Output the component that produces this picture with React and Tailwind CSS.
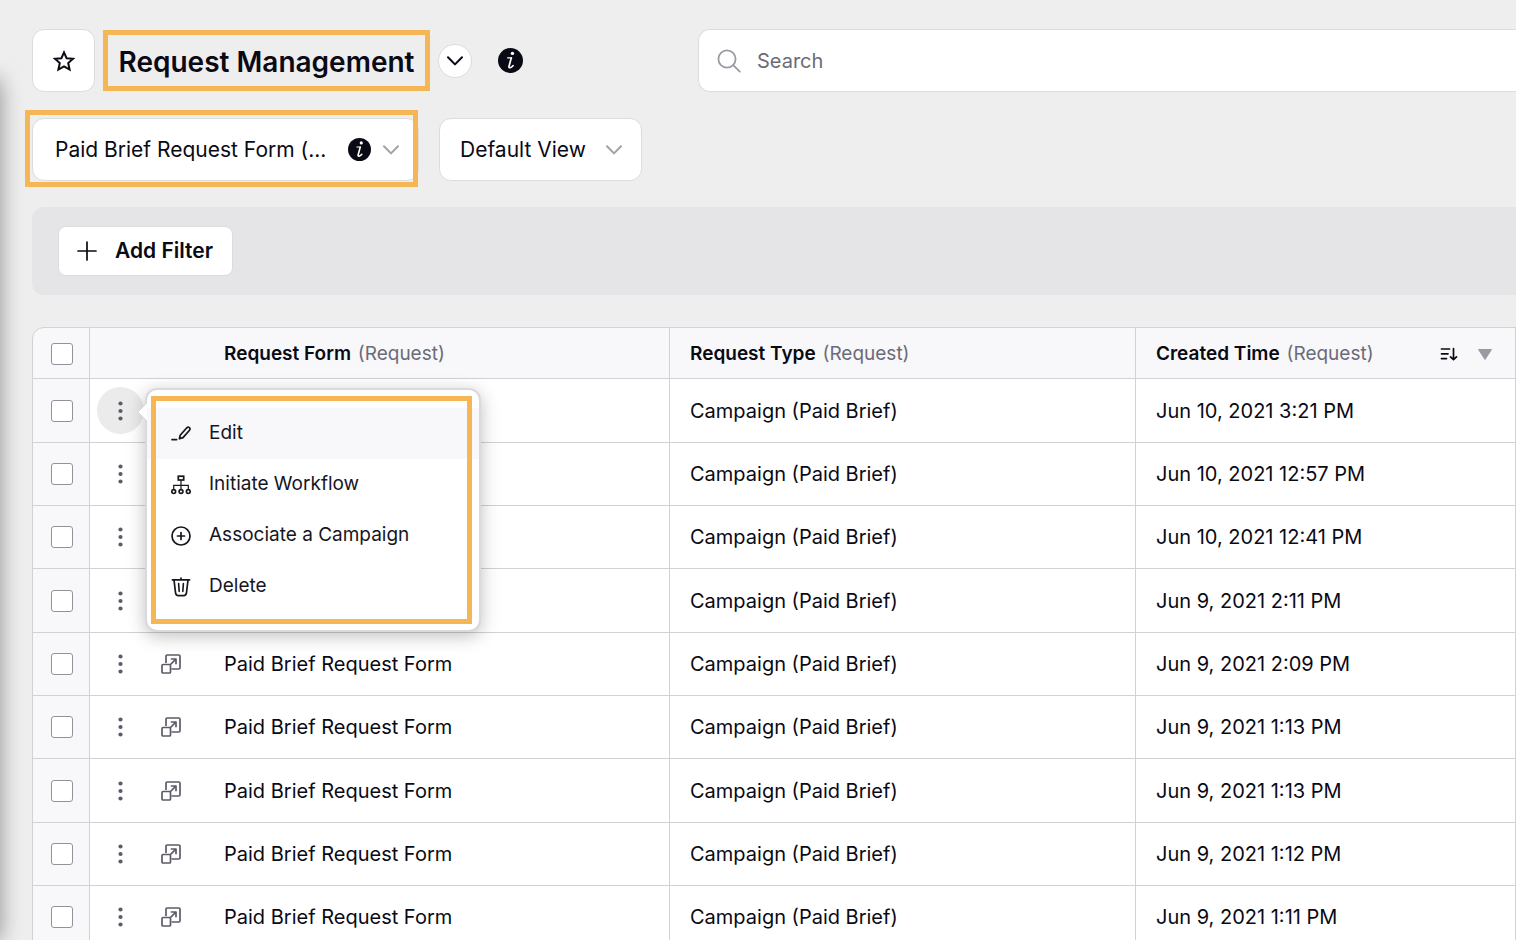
import { useState } from "react";

const rows = [
  { id: 1, form: "", created: "Jun 10, 2021 3:21 PM" },
  { id: 2, form: "", created: "Jun 10, 2021 12:57 PM" },
  { id: 3, form: "", created: "Jun 10, 2021 12:41 PM" },
  { id: 4, form: "", created: "Jun 9, 2021 2:11 PM" },
  { id: 5, form: "Paid Brief Request Form", created: "Jun 9, 2021 2:09 PM" },
  { id: 6, form: "Paid Brief Request Form", created: "Jun 9, 2021 1:13 PM" },
  { id: 7, form: "Paid Brief Request Form", created: "Jun 9, 2021 1:13 PM" },
  { id: 8, form: "Paid Brief Request Form", created: "Jun 9, 2021 1:12 PM" },
  { id: 9, form: "Paid Brief Request Form", created: "Jun 9, 2021 1:11 PM" },
];

const Chevron = ({ className }) => (
  <svg viewBox="0 0 16 10" fill="none" stroke="currentColor" strokeWidth="2" strokeLinecap="round" strokeLinejoin="round" className={className}>
    <path d="M1 1.2 8 8.4 15 1.2" />
  </svg>
);

const InfoIcon = ({ className }) => (
  <svg viewBox="0 0 26 26" className={className}>
    <circle cx="13" cy="13" r="13" fill="#0a0a14" />
    <circle cx="15" cy="5.6" r="1.8" fill="#fff" />
    <path d="M10 10.200H14.200" fill="none" stroke="#fff" strokeWidth="1.3" strokeLinecap="round" />
    <path d="M13.800 10.400 11.400 19.200C11 21.200 13.400 21 15.600 18.400" fill="none" stroke="#fff" strokeWidth="1.8" strokeLinecap="round" strokeLinejoin="round" />
  </svg>
);

const StarIcon = () => (
  <svg viewBox="0 0 24 24" fill="none" stroke="#0a0a14" strokeWidth="2" strokeLinejoin="miter" className="w-6 h-6">
    <path d="M12 3.4 14.6 9.2 21 9.8 16.2 14 17.6 20.6 12 17.3 6.4 20.6 7.8 14 3 9.8 9.4 9.2Z" />
  </svg>
);

const OpenIcon = () => (
  <svg viewBox="0 0 20 20" fill="none" stroke="#5c5c69" strokeWidth="1.7" strokeLinejoin="round" className="w-5 h-5">
    <path d="M5 9V2.2Q5 1 6.200 1H17.800Q19 1 19 2.200V13.800Q19 15 17.800 15H10.500" />
    <rect x="1" y="10.500" width="8.500" height="8.500" rx="1" />
    <path d="M9 11 14.800 5.200M9.800 5H15V10.200" />
  </svg>
);

const EditIcon = () => (
  <svg viewBox="0 0 20 20" fill="none" stroke="#16161f" strokeWidth="1.7" strokeLinecap="round" strokeLinejoin="round" className="w-5 h-5">
    <path d="M1 15.600H5.600" />
    <path d="M8.400 14.800 9.200 11.200 15.800 3.800C17.400 2.200 20 4.400 18.500 6.200L12 13.600Z" />
  </svg>
);

const WorkflowIcon = () => (
  <svg viewBox="0 0 20 20" fill="none" stroke="#16161f" strokeWidth="1.7" className="w-5 h-5">
    <rect x="7.300" y="1.200" width="5.400" height="3.800" />
    <path d="M10 5V14.500M2.700 14.500V10.300H17.300V14.500" strokeWidth="1.200" />
    <circle cx="2.700" cy="16.600" r="1.900" fill="#fff" />
    <circle cx="10" cy="16.600" r="1.900" fill="#fff" />
    <circle cx="17.300" cy="16.600" r="1.900" fill="#fff" />
  </svg>
);

const AssociateIcon = () => (
  <svg viewBox="0 0 20 20" fill="none" stroke="#16161f" strokeWidth="1.7" strokeLinecap="round" className="w-5 h-5">
    <circle cx="10" cy="10" r="9" />
    <path d="M10 6.500V13.500M6.500 10H13.500" />
  </svg>
);

const DeleteIcon = () => (
  <svg viewBox="0 0 20 20" fill="none" stroke="#16161f" strokeWidth="1.7" strokeLinecap="round" strokeLinejoin="round" className="w-5 h-5">
    <path d="M1.400 2.800H18.600M10 1V2.600" />
    <path d="M3 3 4.500 15.600Q4.900 18.600 7.400 18.600H12.600Q15.100 18.600 15.500 15.600L17 3" />
    <path d="M7.600 6.600 8.200 14.400M12.400 6.600 11.800 14.400" strokeWidth="1.600" />
  </svg>
);

const menuItems = [
  { label: "Edit", icon: EditIcon },
  { label: "Initiate Workflow", icon: WorkflowIcon },
  { label: "Associate a Campaign", icon: AssociateIcon },
  { label: "Delete", icon: DeleteIcon },
];

const ActionMenu = () => (
  <div className="absolute left-[55px] top-[9px] z-20 w-[336px] rounded-xl border-2 border-[#d9d9de] bg-white py-[18px] shadow-[0_4px_18px_rgba(0,0,0,0.25)]">
    <svg viewBox="0 0 10 18" className="absolute -left-[10px] top-[13px] w-[10px] h-[18px]">
      <path d="M10 0 1 9 10 18" fill="#fff" stroke="#d9d9de" strokeWidth="1" />
    </svg>
    {menuItems.map(({ label, icon: Icon }) => (
      <button
        key={label}
        type="button"
        className="flex h-[51px] w-full items-center gap-[18px] pl-6 text-left text-[19px] text-[#16161f] first-of-type:bg-[#f8f8fa]"
      >
        <Icon />
        {label}
      </button>
    ))}
    <div className="pointer-events-none absolute top-1.5 bottom-1.5 left-1 right-[7px] border-5 border-[#f5b755]" />
  </div>
);

const Checkbox = ({ label, checked, onChange }) => (
  <input
    type="checkbox"
    aria-label={label}
    checked={checked}
    onChange={onChange}
    className="block mx-auto w-[22px] h-[22px] appearance-none rounded-[3px] border border-[#92929c] bg-white checked:bg-[#5c5c69]"
  />
);

const App = () => {
  const [selected, setSelected] = useState([]);
  const [openRow, setOpenRow] = useState(1);
  const [search, setSearch] = useState("");

  const toggleRow = (id) => {
    setSelected((prev) =>
      prev.includes(id) ? prev.filter((item) => item !== id) : [...prev, id]
    );
  };

  const toggleAll = () => {
    setSelected(selected.length === rows.length ? [] : rows.map((row) => row.id));
  };

  return (
    <div className="relative h-screen overflow-hidden bg-[#eeeeee] pl-8 pt-[29px] font-['Inter',sans-serif] text-[#0a0a14]">
      {/* shadow of the side panel */}
      <div className="absolute right-full top-20 bottom-0 w-10 shadow-[0_0_22px_0_rgba(0,0,0,0.4)]" />

      <header className="flex items-center">
        <div className="flex w-[666px] shrink-0 items-center">
          <button
            type="button"
            aria-label="Favorite"
            className="flex h-[63px] w-[63px] items-center justify-center rounded-xl border border-[#dcdcde] bg-white"
          >
            <StarIcon />
          </button>
          <h1 className="ml-2 flex h-[61px] w-[327px] items-center justify-center whitespace-nowrap border-5 border-[#f5b755] pt-0.5 text-[28px] font-semibold">
            Request Management
          </h1>
          <button
            type="button"
            aria-label="Switch page"
            className="ml-2 flex h-[34px] w-[34px] items-center justify-center rounded-full border border-[#dcdcde] bg-white"
          >
            <Chevron className="w-4 h-[10px]" />
          </button>
          <InfoIcon className="ml-[26px] w-[25px] h-[25px]" />
        </div>
        <label className="flex h-[63px] flex-1 items-center gap-4 rounded-l-xl border border-r-0 border-[#dcdcde] bg-white pl-[18px]">
          <svg viewBox="0 0 24 24" fill="none" stroke="#9a9aa2" strokeWidth="1.8" strokeLinecap="round" className="w-6 h-6">
            <circle cx="10" cy="10" r="8.600" />
            <path d="M16.200 16.200 22.800 22.600" />
          </svg>
          <input
            type="text"
            aria-label="Search"
            placeholder="Search"
            value={search}
            onChange={(e) => setSearch(e.target.value)}
            className="flex-1 text-[20px] outline-none placeholder:text-[#6b6b78]"
          />
        </label>
      </header>

      <div className="mt-[26px] flex gap-5 text-[21px]">
        <div className="relative w-[387px]">
          <select
            aria-label="Request form"
            className="h-[63px] w-full appearance-none rounded-xl border border-[#dcdcde] bg-white pl-[22px]"
          >
            <option>Paid Brief Request Form (...</option>
          </select>
          <div className="pointer-events-none absolute inset-y-0 right-5 flex items-center gap-3">
            <InfoIcon className="w-[23px] h-[23px]" />
            <Chevron className="w-4 h-[10px] text-[#a2a2a8]" />
          </div>
          <div className="pointer-events-none absolute -top-2 -bottom-1.5 -left-[7px] right-px border-5 border-[#f5b755]" />
        </div>
        <div className="relative w-[203px]">
          <select
            aria-label="View"
            className="h-[63px] w-full appearance-none rounded-xl border border-[#dcdcde] bg-white pl-5"
          >
            <option>Default View</option>
          </select>
          <div className="pointer-events-none absolute inset-y-0 right-5 flex items-center">
            <Chevron className="w-4 h-[10px] text-[#a2a2a8]" />
          </div>
        </div>
      </div>

      <div className="mt-[26px] flex h-[88px] items-center rounded-l-xl bg-[#e5e5e8] pl-[26px]">
        <button
          type="button"
          className="flex h-[50px] w-[175px] items-center gap-[18px] whitespace-nowrap rounded-lg border border-[#dcdcde] bg-white pl-[18px] text-[21px] font-semibold"
        >
          <svg viewBox="0 0 20 20" stroke="currentColor" strokeWidth="1.7" strokeLinecap="round" className="w-5 h-5">
            <path d="M10 1V19M1 10H19" />
          </svg>
          Add Filter
        </button>
      </div>

      <table className="mt-8 w-full table-fixed border-separate border-spacing-0 text-left [&_td]:border-b [&_td]:border-r [&_td]:border-[#d2d2d5] [&_th]:border-y [&_th]:border-r [&_th]:border-[#d2d2d5]">
        <colgroup>
          <col className="w-[58px]" />
          <col className="w-[580px]" />
          <col className="w-[466px]" />
          <col />
        </colgroup>
        <thead>
          <tr className="h-[52px] text-[19px] [&>th]:bg-[#f8f8fa] [&>th]:pt-0.5">
            <th className="rounded-tl-xl border-l pl-0.5">
              <Checkbox
                label="Select all"
                checked={selected.length === rows.length}
                onChange={toggleAll}
              />
            </th>
            <th className="pl-[134px] font-semibold">
              Request Form <span className="ml-0.5 font-normal text-[#6b6b78]">(Request)</span>
            </th>
            <th className="pl-5 font-semibold">
              Request Type <span className="ml-0.5 font-normal text-[#6b6b78]">(Request)</span>
            </th>
            <th className="pl-5 pr-[23px] font-semibold">
              <div className="flex items-center">
                <span>
                  Created Time <span className="ml-0.5 font-normal text-[#6b6b78]">(Request)</span>
                </span>
                <svg viewBox="0 0 18 14" fill="none" stroke="currentColor" strokeWidth="1.7" strokeLinecap="round" strokeLinejoin="round" className="ml-auto w-[18px] h-[14px]">
                  <path d="M1.500 2H9.500M1.500 6.800H8M1.500 11.600H6.500M13.500 1.500V12.500M10.500 9.800 13.500 12.700 16.500 9.800" />
                </svg>
                <svg viewBox="0 0 14 11" className="ml-5 w-[14px] h-[11px]">
                  <path d="M.5.5H13.500L7 10.500Z" fill="#9a9aa2" stroke="#9a9aa2" strokeLinejoin="round" />
                </svg>
              </div>
            </th>
          </tr>
        </thead>
        <tbody>
          {rows.map((row) => (
            <tr key={row.id} className="h-[63px] text-[20px] nth-[3n+1]:h-16 [&>td]:bg-white">
              <td className="border-l bg-[#f8f8fa]! pl-0.5">
                <Checkbox
                  label={`Select row ${row.id}`}
                  checked={selected.includes(row.id)}
                  onChange={() => toggleRow(row.id)}
                />
              </td>
              <td className="relative pl-[7px]">
                <div className="flex items-center">
                  <button
                    type="button"
                    aria-label="Row actions"
                    onClick={() => setOpenRow(openRow === row.id ? null : row.id)}
                    className={`flex h-[47px] w-[47px] items-center justify-center rounded-full ${
                      openRow === row.id ? "bg-[#ebebeb]" : ""
                    }`}
                  >
                    <svg viewBox="0 0 5 20" fill="#5c5c69" className="w-[5px] h-5">
                      <circle cx="2.500" cy="2.500" r="2.100" />
                      <circle cx="2.500" cy="10" r="2.100" />
                      <circle cx="2.500" cy="17.500" r="2.100" />
                    </svg>
                  </button>
                  {row.form && (
                    <>
                      <button type="button" aria-label="Open request" className="ml-[17px] mr-[43px]">
                        <OpenIcon />
                      </button>
                      {row.form}
                    </>
                  )}
                </div>
                {openRow === row.id && <ActionMenu />}
              </td>
              <td className="pl-5">Campaign (Paid Brief)</td>
              <td className="pl-5">{row.created}</td>
            </tr>
          ))}
        </tbody>
      </table>
    </div>
  );
};

export default App;
